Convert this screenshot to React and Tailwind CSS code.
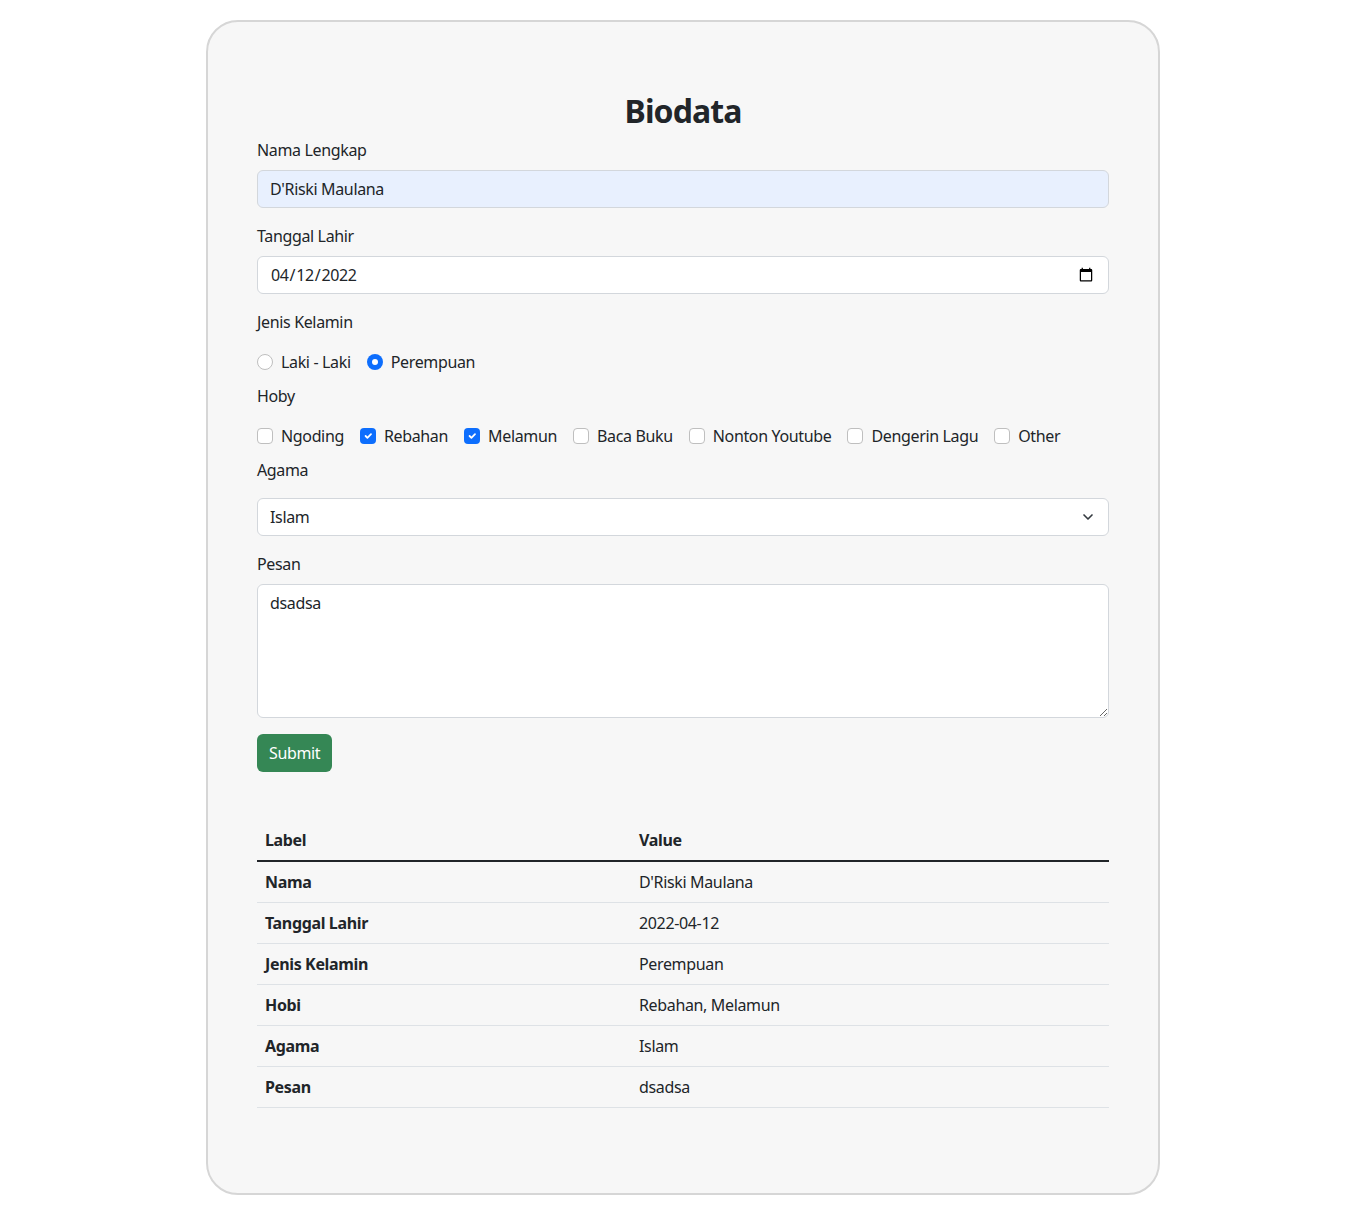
import { ChevronDown } from "lucide-react";

const hobbies = [
  { name: "Ngoding", checked: false },
  { name: "Rebahan", checked: true },
  { name: "Melamun", checked: true },
  { name: "Baca Buku", checked: false },
  { name: "Nonton Youtube", checked: false },
  { name: "Dengerin Lagu", checked: false },
  { name: "Other", checked: false },
];

const rows = [
  ["Nama", "D'Riski Maulana"],
  ["Tanggal Lahir", "2022-04-12"],
  ["Jenis Kelamin", "Perempuan"],
  ["Hobi", "Rebahan, Melamun"],
  ["Agama", "Islam"],
  ["Pesan", "dsadsa"],
];

function Check({ checked }) {
  if (checked) {
    return (
      <span className="w-4 h-4 rounded-[4px] bg-[#0d6efd] flex items-center justify-center flex-shrink-0">
        <svg width="12" height="12" viewBox="0 0 20 20" fill="none">
          <path d="M6 10l3 3 6-6" stroke="#fff" strokeWidth="3" strokeLinecap="round" strokeLinejoin="round" />
        </svg>
      </span>
    );
  }
  return <span className="w-4 h-4 rounded-[4px] border border-[#bfbfbf] bg-white flex-shrink-0" />;
}

function Radio({ checked }) {
  if (checked) {
    return (
      <span className="w-4 h-4 rounded-full bg-[#0d6efd] flex items-center justify-center flex-shrink-0">
        <span className="w-1.5 h-1.5 rounded-full bg-white" />
      </span>
    );
  }
  return <span className="w-4 h-4 rounded-full border border-[#bfbfbf] bg-white flex-shrink-0" />;
}

const inputCls =
  "block w-full h-[38px] px-3 text-base tracking-[-0.35px] text-[#212529] border border-[#d3d7dc] rounded-[6px] outline-none";

export default function App() {
  return (
    <div className="min-h-screen bg-white pt-5 pb-5 font-['Noto_Sans',sans-serif] tracking-[-0.35px] text-[#212529]">
      <div className="w-[954px] mx-auto border-2 border-[#d6d6d6] rounded-[32px] bg-[#f7f7f7] px-[49px] pt-[70px] pb-[85px]">
        <h1 className="text-[32px] leading-[38px] font-bold tracking-[-0.9px] text-center mb-2">Biodata</h1>

        <label className="block leading-6 mb-2">Nama Lengkap</label>
        <input className={`${inputCls} bg-[#e8f0fe] mb-4`} defaultValue="D'Riski Maulana" />

        <label className="block leading-6 mb-2">Tanggal Lahir</label>
        <input type="date" className={`${inputCls} bg-white mb-4`} defaultValue="2022-04-12" />

        <label className="block leading-6">Jenis Kelamin</label>
        <div className="flex items-center gap-4 h-6 mt-4">
          <div className="flex items-center gap-2">
            <Radio checked={false} />
            <span>Laki - Laki</span>
          </div>
          <div className="flex items-center gap-2">
            <Radio checked />
            <span>Perempuan</span>
          </div>
        </div>

        <label className="block leading-6 mt-[10px]">Hoby</label>
        <div className="flex items-center gap-4 h-6 mt-4">
          {hobbies.map((h) => (
            <div key={h.name} className="flex items-center gap-2">
              <Check checked={h.checked} />
              <span>{h.name}</span>
            </div>
          ))}
        </div>

        <label className="block leading-6 mt-[10px]">Agama</label>
        <div className="relative mt-4">
          <select className={`${inputCls} bg-white appearance-none`} defaultValue="Islam">
            <option>Islam</option>
            <option>Kristen</option>
            <option>Hindu</option>
            <option>Buddha</option>
          </select>
          <ChevronDown
            size={16}
            strokeWidth={2.5}
            className="absolute right-[13px] top-[11px] text-[#343a40] pointer-events-none"
          />
        </div>

        <label className="block leading-6 mt-4 mb-2">Pesan</label>
        <textarea
          className="block w-full h-[134px] px-3 py-1.5 text-base leading-6 tracking-[-0.35px] bg-white border border-[#d3d7dc] rounded-[6px] outline-none"
          defaultValue="dsadsa"
        />

        <button className="mt-4 h-[38px] px-3 rounded-[6px] bg-[#358755] text-white text-base tracking-[-0.35px]">
          Submit
        </button>

        <table className="w-full mt-12 border-collapse text-left">
          <thead>
            <tr className="border-b-2 border-[#212529]">
              <th className="w-[374px] px-2 py-2 leading-6 font-bold">Label</th>
              <th className="px-2 py-2 leading-6 font-bold">Value</th>
            </tr>
          </thead>
          <tbody>
            {rows.map(([k, v]) => (
              <tr key={k} className="border-b border-[#dee2e6]">
                <td className="px-2 py-2 leading-6 font-bold">{k}</td>
                <td className="px-2 py-2 leading-6">{v}</td>
              </tr>
            ))}
          </tbody>
        </table>
      </div>
    </div>
  );
}
